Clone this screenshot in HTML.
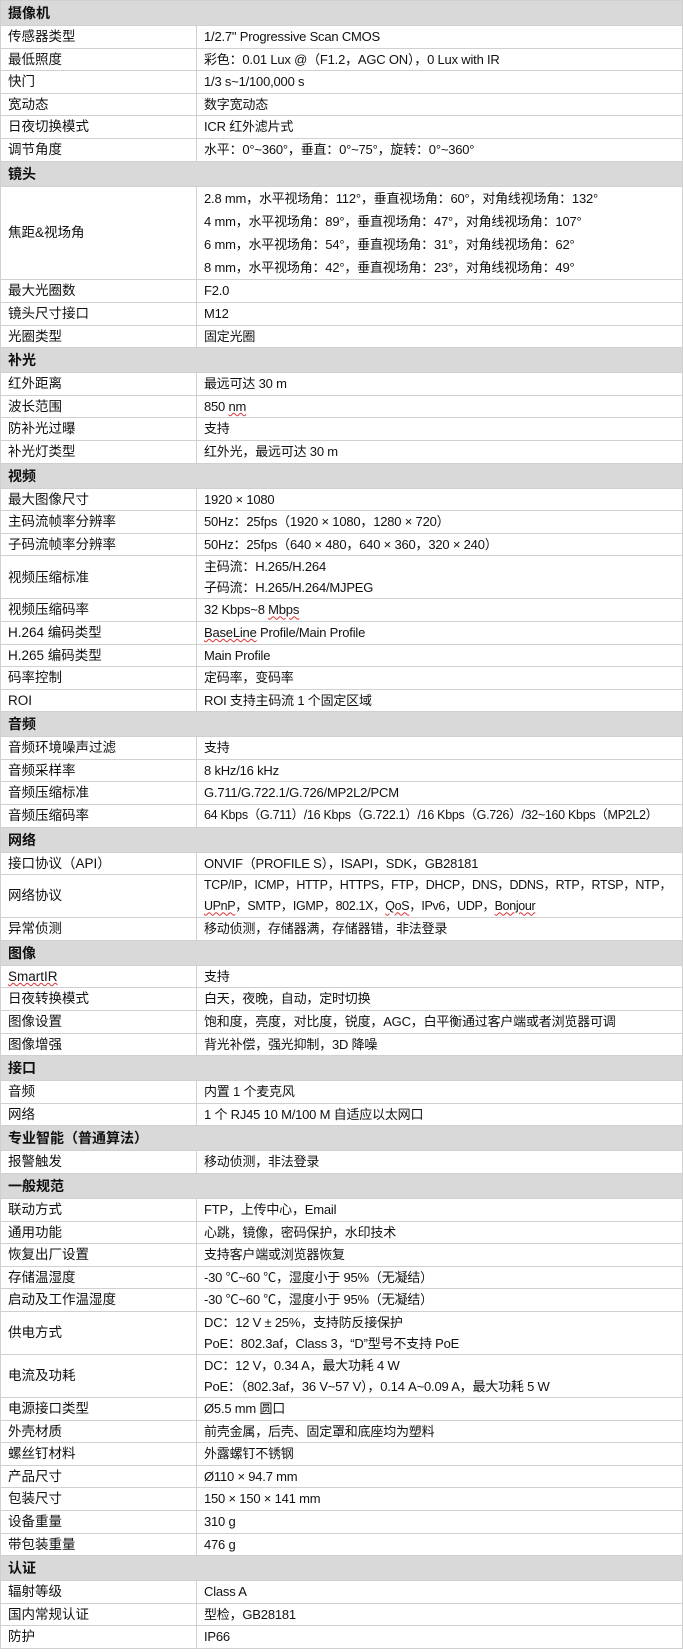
<!DOCTYPE html>
<html><head><meta charset="utf-8"><style>
html,body{margin:0;padding:0;background:#fff;width:683px;height:1652px;overflow:hidden}
table{border-collapse:collapse;width:682px;margin:0;font-family:"Liberation Sans","Noto Sans CJK SC",sans-serif;font-size:13.5px;color:#111;table-layout:fixed}
td{border:1px solid #d0d0d0;padding:0 7px;height:21.6px;line-height:21.6px;white-space:nowrap;vertical-align:middle;overflow:hidden}
td+td{font-size:13px;letter-spacing:-0.2px}
tr.h td{background:#d9d9d9;font-weight:bold;height:24px;line-height:24px;font-size:14px;letter-spacing:0}
.w{text-decoration:underline wavy #d33;text-decoration-thickness:1px}
</style></head><body>
<table>
<colgroup><col style="width:196px"><col style="width:486px"></colgroup>
<tr class="h"><td colspan="2">摄像机</td></tr>
<tr><td>传感器类型</td><td>1/2.7" Progressive Scan CMOS</td></tr>
<tr><td>最低照度</td><td>彩色：0.01 Lux @（F1.2，AGC ON），0 Lux with IR</td></tr>
<tr><td>快门</td><td>1/3 s~1/100,000 s</td></tr>
<tr><td>宽动态</td><td>数字宽动态</td></tr>
<tr><td>日夜切换模式</td><td>ICR 红外滤片式</td></tr>
<tr><td>调节角度</td><td>水平：0°~360°，垂直：0°~75°，旋转：0°~360°</td></tr>
<tr class="h"><td colspan="2">镜头</td></tr>
<tr><td>焦距&amp;视场角</td><td style="line-height:23.2px">2.8 mm，水平视场角：112°，垂直视场角：60°，对角线视场角：132°<br>4 mm，水平视场角：89°，垂直视场角：47°，对角线视场角：107°<br>6 mm，水平视场角：54°，垂直视场角：31°，对角线视场角：62°<br>8 mm，水平视场角：42°，垂直视场角：23°，对角线视场角：49°</td></tr>
<tr><td>最大光圈数</td><td>F2.0</td></tr>
<tr><td>镜头尺寸接口</td><td>M12</td></tr>
<tr><td>光圈类型</td><td>固定光圈</td></tr>
<tr class="h"><td colspan="2">补光</td></tr>
<tr><td>红外距离</td><td>最远可达 30 m</td></tr>
<tr><td>波长范围</td><td>850 <span class="w">nm</span></td></tr>
<tr><td>防补光过曝</td><td>支持</td></tr>
<tr><td>补光灯类型</td><td>红外光，最远可达 30 m</td></tr>
<tr class="h"><td colspan="2">视频</td></tr>
<tr><td>最大图像尺寸</td><td>1920 × 1080</td></tr>
<tr><td>主码流帧率分辨率</td><td>50Hz：25fps（1920 × 1080，1280 × 720）</td></tr>
<tr><td>子码流帧率分辨率</td><td>50Hz：25fps（640 × 480，640 × 360，320 × 240）</td></tr>
<tr><td>视频压缩标准</td><td style="line-height:21px">主码流：H.265/H.264<br>子码流：H.265/H.264/MJPEG</td></tr>
<tr><td>视频压缩码率</td><td>32 Kbps~8 <span class="w">Mbps</span></td></tr>
<tr><td>H.264 编码类型</td><td><span class="w">BaseLine</span> Profile/Main Profile</td></tr>
<tr><td>H.265 编码类型</td><td>Main Profile</td></tr>
<tr><td>码率控制</td><td>定码率，变码率</td></tr>
<tr><td>ROI</td><td>ROI 支持主码流 1 个固定区域</td></tr>
<tr class="h"><td colspan="2">音频</td></tr>
<tr><td>音频环境噪声过滤</td><td>支持</td></tr>
<tr><td>音频采样率</td><td>8 kHz/16 kHz</td></tr>
<tr><td>音频压缩标准</td><td>G.711/G.722.1/G.726/MP2L2/PCM</td></tr>
<tr><td>音频压缩码率</td><td style="font-size:12.5px;letter-spacing:-0.3px">64 Kbps（G.711）/16 Kbps（G.722.1）/16 Kbps（G.726）/32~160 Kbps（MP2L2）</td></tr>
<tr class="h"><td colspan="2">网络</td></tr>
<tr><td>接口协议（API）</td><td>ONVIF（PROFILE S），ISAPI，SDK，GB28181</td></tr>
<tr><td>网络协议</td><td style="line-height:21px;font-size:12.5px;letter-spacing:-0.35px">TCP/IP，ICMP，HTTP，HTTPS，FTP，DHCP，DNS，DDNS，RTP，RTSP，NTP，<br><span class="w">UPnP</span>，SMTP，IGMP，802.1X，<span class="w">QoS</span>，IPv6，UDP，<span class="w">Bonjour</span></td></tr>
<tr><td>异常侦测</td><td>移动侦测，存储器满，存储器错，非法登录</td></tr>
<tr class="h"><td colspan="2">图像</td></tr>
<tr><td><span class="w">SmartIR</span></td><td>支持</td></tr>
<tr><td>日夜转换模式</td><td>白天，夜晚，自动，定时切换</td></tr>
<tr><td>图像设置</td><td>饱和度，亮度，对比度，锐度，AGC，白平衡通过客户端或者浏览器可调</td></tr>
<tr><td>图像增强</td><td>背光补偿，强光抑制，3D 降噪</td></tr>
<tr class="h"><td colspan="2">接口</td></tr>
<tr><td>音频</td><td>内置 1 个麦克风</td></tr>
<tr><td>网络</td><td>1 个 RJ45 10 M/100 M 自适应以太网口</td></tr>
<tr class="h"><td colspan="2">专业智能（普通算法）</td></tr>
<tr><td>报警触发</td><td>移动侦测，非法登录</td></tr>
<tr class="h"><td colspan="2">一般规范</td></tr>
<tr><td>联动方式</td><td>FTP，上传中心，Email</td></tr>
<tr><td>通用功能</td><td>心跳，镜像，密码保护，水印技术</td></tr>
<tr><td>恢复出厂设置</td><td>支持客户端或浏览器恢复</td></tr>
<tr><td>存储温湿度</td><td>-30 ℃~60 ℃，湿度小于 95%（无凝结）</td></tr>
<tr><td>启动及工作温湿度</td><td>-30 ℃~60 ℃，湿度小于 95%（无凝结）</td></tr>
<tr><td>供电方式</td><td style="line-height:21px">DC：12 V ± 25%，支持防反接保护<br>PoE：802.3af，Class 3，“D”型号不支持 PoE</td></tr>
<tr><td>电流及功耗</td><td style="line-height:21px">DC：12 V，0.34 A，最大功耗 4 W<br>PoE：（802.3af，36 V~57 V），0.14 A~0.09 A，最大功耗 5 W</td></tr>
<tr><td>电源接口类型</td><td>Ø5.5 mm 圆口</td></tr>
<tr><td>外壳材质</td><td>前壳金属，后壳、固定罩和底座均为塑料</td></tr>
<tr><td>螺丝钉材料</td><td>外露螺钉不锈钢</td></tr>
<tr><td>产品尺寸</td><td>Ø110 × 94.7 mm</td></tr>
<tr><td>包装尺寸</td><td>150 × 150 × 141 mm</td></tr>
<tr><td>设备重量</td><td>310 g</td></tr>
<tr><td>带包装重量</td><td>476 g</td></tr>
<tr class="h"><td colspan="2">认证</td></tr>
<tr><td>辐射等级</td><td>Class A</td></tr>
<tr><td>国内常规认证</td><td>型检，GB28181</td></tr>
<tr><td>防护</td><td>IP66</td></tr>
</table>
</body></html>
